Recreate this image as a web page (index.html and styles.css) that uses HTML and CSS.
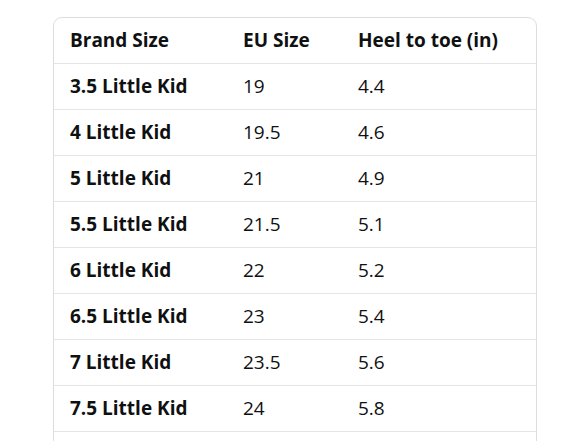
FILE: index.html
```html
<!DOCTYPE html>
<html>
<head>
<meta charset="utf-8">
<link rel="stylesheet" href="styles.css">
</head>
<body>
<div class="page">
  <div class="card">
    <table class="size-table">
      <thead>
        <tr><th class="c1">Brand Size</th><th class="c2">EU Size</th><th class="c3">Heel to toe (in)</th></tr>
      </thead>
      <tbody>
        <tr><th>3.5 Little Kid</th><td>19</td><td>4.4</td></tr>
        <tr><th>4 Little Kid</th><td>19.5</td><td>4.6</td></tr>
        <tr><th>5 Little Kid</th><td>21</td><td>4.9</td></tr>
        <tr><th>5.5 Little Kid</th><td>21.5</td><td>5.1</td></tr>
        <tr><th>6 Little Kid</th><td>22</td><td>5.2</td></tr>
        <tr><th>6.5 Little Kid</th><td>23</td><td>5.4</td></tr>
        <tr><th>7 Little Kid</th><td>23.5</td><td>5.6</td></tr>
        <tr><th>7.5 Little Kid</th><td>24</td><td>5.8</td></tr>
        <tr class="empty"><th></th><td></td><td></td></tr>
      </tbody>
    </table>
  </div>
</div>
</body>
</html>
```
FILE: styles.css
```css
html, body {
  margin: 0;
  padding: 0;
  background: #ffffff;
}
body {
  font-family: "Open Sans", "Noto Sans", sans-serif;
  color: #0f1111;
}
.page {
  padding: 17px 0 0 53px;
  height: 441px;
  overflow: hidden;
  box-sizing: border-box;
}
.card {
  width: 484px;
  box-sizing: border-box;
  border: 1px solid #dcdede;
  border-radius: 9px;
  overflow: hidden;
}
.size-table {
  width: 100%;
  border-collapse: collapse;
  table-layout: fixed;
}
.size-table th,
.size-table td {
  height: 46px;
  padding: 0 0 0 16px;
  text-align: left;
  vertical-align: middle;
  font-size: 19px;
  line-height: 22px;
  border-bottom: 1px solid #e3e6e6;
  box-sizing: border-box;
  white-space: nowrap;
}
.size-table thead th {
  height: 45px;
}
.size-table th {
  font-weight: 700;
}
.size-table td {
  font-weight: 400;
}
.c1 { width: 173px; }
.c2 { width: 115px; }
```
